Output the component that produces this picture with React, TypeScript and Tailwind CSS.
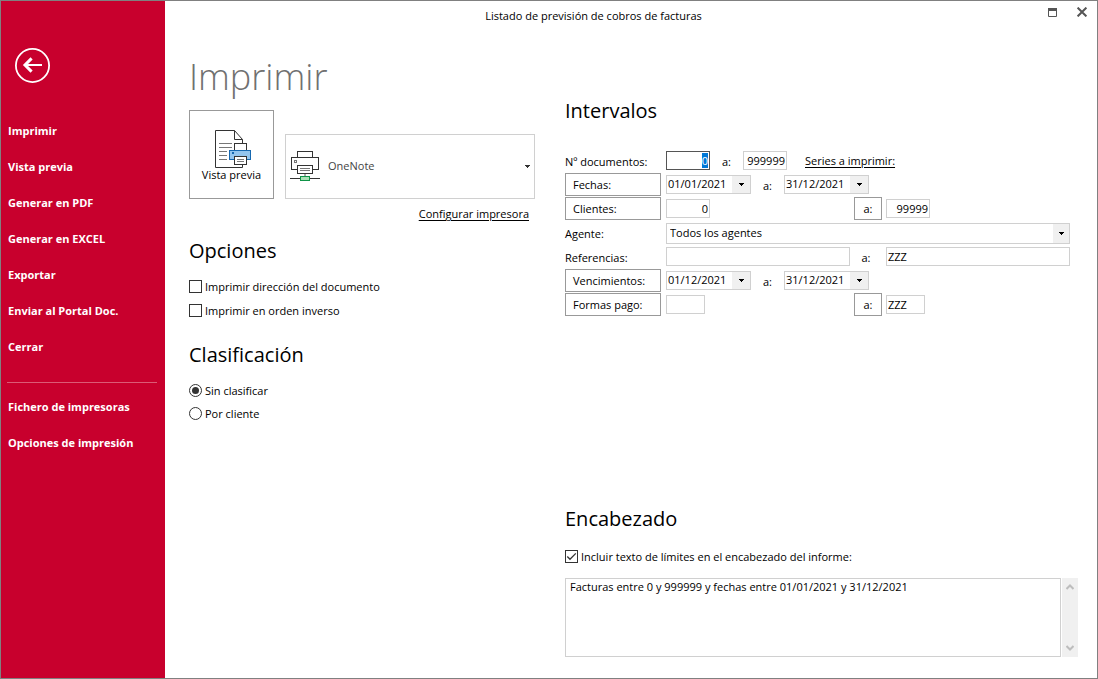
import { useState } from 'react';
import type { ReactNode } from 'react';
import { clsx } from 'clsx';

const MENU = [
  'Imprimir',
  'Vista previa',
  'Generar en PDF',
  'Generar en EXCEL',
  'Exportar',
  'Enviar al Portal Doc.',
  'Cerrar'
];

const SETTINGS_MENU = ['Fichero de impresoras', 'Opciones de impresión'];

function BackIcon() {
  return (
    <svg width="35" height="35" viewBox="0 0 35 35" fill="none" stroke="#fff" aria-hidden="true">
      <circle cx="17.5" cy="17.5" r="16.6" strokeWidth="1.8" />
      <path d="M10.5 17H27" strokeWidth="2" />
      <path d="M16.6 10.4L10 17L16.6 23.6" strokeWidth="3" />
    </svg>
  );
}

function PreviewIcon() {
  return (
    <svg width="37" height="38" viewBox="0 0 37 38" fill="none" aria-hidden="true">
      <path d="M0.5 0.5H19.5L27.5 9.5V37.5H0.5Z" fill="#fff" stroke="#333" />
      <path d="M19.5 0.5V9.5H27.5" stroke="#333" />
      <path d="M4 13.5H17M4 17.5H17M4 21.5H12M4 25.5H12M4 29.5H12" stroke="#777" />
      <rect x="19.5" y="13.5" width="12" height="8" fill="#fff" stroke="#333" />
      <rect x="14.5" y="20.5" width="21" height="9" fill="#93c5ee" stroke="#1668b0" />
      <rect x="17" y="22" width="2" height="2" fill="#1668b0" />
      <rect x="19.5" y="26.5" width="12" height="8" fill="#fff" stroke="#333" />
      <path d="M22 29.5H29M22 31.5H29" stroke="#777" />
    </svg>
  );
}

function PrinterIcon() {
  return (
    <svg width="30" height="31" viewBox="0 0 30 31" fill="none" className="shrink-0" aria-hidden="true">
      <rect x="7.5" y="0.5" width="15" height="7" fill="#fff" stroke="#333" />
      <rect x="1.5" y="6.5" width="27" height="12" fill="#fff" stroke="#333" />
      <rect x="4.5" y="9.5" width="2" height="2" stroke="#777" />
      <rect x="7.5" y="14.5" width="15" height="8" fill="#fff" stroke="#333" />
      <path d="M10 17.5H20M10 19.5H20" stroke="#777" />
      <path d="M15 23V25" stroke="#aaa" strokeWidth="2" />
      <path d="M0 27.5H30" stroke="#333" />
      <rect x="10.5" y="25.5" width="9" height="4" fill="#a9e0b5" stroke="#0f9347" />
    </svg>
  );
}

function Caret() {
  return (
    <svg width="5" height="3" viewBox="0 0 5 3" aria-hidden="true" shapeRendering="crispEdges">
      <path d="M0 0H5V1H4V2H3V3H2V2H1V1H0Z" fill="currentColor" />
    </svg>
  );
}

function SectionTitle({ children, className }: { children: ReactNode; className?: string }) {
  return <h2 className={clsx('text-[20px] leading-7', className)}>{children}</h2>;
}

function Field({ label, className, ...rest }: React.ComponentProps<'input'> & { label: string }) {
  return (
    <input
      aria-label={label}
      className={clsx(
        'h-[19px] min-w-0 border border-[#d0d0d0] bg-white px-px pb-px leading-[14px] outline-none',
        'selection:bg-[#0078d7] selection:text-white focus:border-[#555]',
        className
      )}
      {...rest}
    />
  );
}

function DateField({ label, value }: { label: string; value: string }) {
  return (
    <div className="flex h-[19px] w-[85px] border border-[#d0d0d0]">
      <input
        aria-label={label}
        defaultValue={value}
        className="min-w-0 flex-1 pb-px pl-px leading-[14px] outline-none"
      />
      <button
        type="button"
        aria-label={`Abrir calendario ${label}`}
        className="flex w-[18px] items-center justify-center bg-[#f0f0f0]"
      >
        <Caret />
      </button>
    </div>
  );
}

function BoxButton({ children, className }: { children: ReactNode; className?: string }) {
  return (
    <button type="button" className={clsx('h-[23px] border border-[#999] bg-white hover:bg-gray-50', className)}>
      {children}
    </button>
  );
}

function Row({ label, boxed, children }: { label: string; boxed?: boolean; children: ReactNode }) {
  return (
    <div className="flex h-6 items-center pb-px">
      {boxed ? (
        <BoxButton className="mr-[5px] w-24 shrink-0 pl-[7px] text-left">{label}</BoxButton>
      ) : (
        <span className="mr-[5px] w-24 shrink-0 pt-0.5">{label}</span>
      )}
      {children}
    </div>
  );
}

function DateRange({ name, from, to }: { name: string; from: string; to: string }) {
  return (
    <>
      <DateField label={`${name} desde`} value={from} />
      <span className="w-[33px] pt-0.5 text-center">a:</span>
      <DateField label={`${name} hasta`} value={to} />
    </>
  );
}

function Check({ label, defaultChecked }: { label: string; defaultChecked?: boolean }) {
  return (
    <label className="flex h-6 items-center gap-[3px]">
      <span className="mb-px grid size-[13px] shrink-0">
        <input
          type="checkbox"
          defaultChecked={defaultChecked}
          className="peer col-start-1 row-start-1 size-[13px] appearance-none border border-[#333] bg-white"
        />
        <svg
          viewBox="0 0 13 13"
          fill="none"
          stroke="#333"
          strokeWidth="1.3"
          className="pointer-events-none invisible col-start-1 row-start-1 size-[13px] peer-checked:visible"
          aria-hidden="true"
        >
          <path d="M2.3 6.5L5 9.3L10.8 3.4" />
        </svg>
      </span>
      {label}
    </label>
  );
}

function Radio({ label, checked, onChange }: { label: string; checked: boolean; onChange: () => void }) {
  return (
    <label className="flex h-[23px] items-center gap-[3px]">
      <input
        type="radio"
        name="clasificacion"
        checked={checked}
        onChange={onChange}
        className="grid size-[13px] shrink-0 appearance-none place-content-center rounded-full border border-[#333] before:size-[7px] before:rounded-full checked:before:bg-[#333]"
      />
      {label}
    </label>
  );
}

function Sidebar() {
  const itemClass = 'flex h-9 w-full items-center pl-[7px] text-left font-bold hover:bg-[#b00026]';

  return (
    <aside className="w-[164px] shrink-0 bg-[#c8002d] pt-[47px] text-white">
      <button type="button" aria-label="Volver" className="ml-3.5 block rounded-full">
        <BackIcon />
      </button>
      <nav className="mt-[30px]">
        {MENU.map(item => (
          <button key={item} type="button" className={itemClass}>
            {item}
          </button>
        ))}
        <hr className="mt-[17px] mr-2 mb-1.5 ml-1.5 border-[#dc5b76]" />
        {SETTINGS_MENU.map(item => (
          <button key={item} type="button" className={itemClass}>
            {item}
          </button>
        ))}
      </nav>
    </aside>
  );
}

function TitleBar() {
  return (
    <header className="flex h-[30px] items-center">
      <div className="flex-1 text-center">Listado de previsión de cobros de facturas</div>
      <div className="flex w-[75px] items-center justify-end gap-5 pr-2.5 pb-2">
        <button type="button" aria-label="Maximizar">
          <svg width="9" height="9" viewBox="0 0 9 9" fill="none" stroke="#555" className="block">
            <path d="M0.5 0.5H8.5V8.5H0.5Z" />
            <path d="M0 1.5H9" strokeWidth="3" />
          </svg>
        </button>
        <button type="button" aria-label="Cerrar ventana">
          <svg width="10" height="10" viewBox="0 0 10 10" stroke="#555" strokeWidth="2" className="block">
            <path d="M0.6 0.6L9.4 9.4M9.4 0.6L0.6 9.4" />
          </svg>
        </button>
      </div>
    </header>
  );
}

function PrintPanel() {
  const [order, setOrder] = useState('none');

  return (
    <section className="w-[346px] shrink-0 pt-[22px]">
      <h1 className="text-[36px] leading-[48px] font-light text-[#707070]">Imprimir</h1>
      <div className="mt-[9px] flex items-end gap-[11px]">
        <button
          type="button"
          className="flex h-[89px] w-[85px] shrink-0 flex-col items-center border border-[#999] pt-[19px] leading-[14px]"
        >
          <span className="pl-1">
            <PreviewIcon />
          </span>
          Vista previa
        </button>
        <div className="relative flex h-[65px] flex-1 items-center border border-[#d0d0d0] pl-1">
          <PrinterIcon />
          <select
            aria-label="Impresora"
            className="h-full min-w-0 flex-1 appearance-none pb-0.5 pl-2 text-[#444] outline-none"
          >
            <option>OneNote</option>
          </select>
          <span className="pointer-events-none absolute right-1 text-[#333]">
            <Caret />
          </span>
        </div>
      </div>
      <div className="mt-[7px] pr-1.5 text-right">
        <a href="#configurar" className="underline underline-offset-2">
          Configurar impresora
        </a>
      </div>

      <SectionTitle className="mt-[15px]">Opciones</SectionTitle>
      <div className="mt-2.5">
        <Check label="Imprimir dirección del documento" />
        <Check label="Imprimir en orden inverso" />
      </div>

      <SectionTitle className="mt-[18px]">Clasificación</SectionTitle>
      <div className="mt-2.5">
        <Radio label="Sin clasificar" checked={order === 'none'} onChange={() => setOrder('none')} />
        <Radio label="Por cliente" checked={order === 'client'} onChange={() => setOrder('client')} />
      </div>
    </section>
  );
}

function RangesPanel() {
  return (
    <section className="flex min-w-0 flex-1 flex-col pt-[66px]">
      <SectionTitle>Intervalos</SectionTitle>
      <div className="mt-6 mr-2">
        <Row label="Nº documentos:">
          <Field
            label="Documento desde"
            defaultValue="0"
            autoFocus
            onFocus={e => e.target.select()}
            className="w-11 text-right"
          />
          <span className="w-[33px] pt-0.5 text-center">a:</span>
          <Field label="Documento hasta" defaultValue="999999" className="w-11 text-right" />
          <a href="#series" className="ml-[18px] underline underline-offset-2">
            Series a imprimir:
          </a>
        </Row>
        <Row label="Fechas:" boxed>
          <DateRange name="Fecha" from="01/01/2021" to="31/12/2021" />
        </Row>
        <Row label="Clientes:" boxed>
          <div className="mr-1 flex w-[184px]">
            <Field label="Cliente desde" defaultValue="0" className="w-11 text-right" />
          </div>
          <BoxButton className="mr-1 w-7">a:</BoxButton>
          <Field label="Cliente hasta" defaultValue="99999" className="w-11 text-right" />
        </Row>
        <Row label="Agente:">
          <div className="relative mt-px flex h-[21px] flex-1 border border-[#d0d0d0]">
            <select aria-label="Agente" className="w-full appearance-none pl-[3px] outline-none">
              <option>Todos los agentes</option>
            </select>
            <span className="pointer-events-none absolute inset-y-0 right-0 flex w-4 items-center justify-center bg-[#f0f0f0]">
              <Caret />
            </span>
          </div>
        </Row>
        <Row label="Referencias:">
          <Field label="Referencia desde" className="mr-1 w-[184px]" />
          <span className="mr-1 w-7 pt-0.5 pr-1 text-center">a:</span>
          <Field label="Referencia hasta" defaultValue="ZZZ" className="flex-1" />
        </Row>
        <Row label="Vencimientos:" boxed>
          <DateRange name="Vencimiento" from="01/12/2021" to="31/12/2021" />
        </Row>
        <Row label="Formas pago:" boxed>
          <div className="mr-1 flex w-[184px]">
            <Field label="Forma de pago desde" className="w-[39px]" />
          </div>
          <BoxButton className="mr-1 w-7">a:</BoxButton>
          <Field label="Forma de pago hasta" defaultValue="ZZZ" className="w-[39px]" />
        </Row>
      </div>

      <SectionTitle className="mt-auto">Encabezado</SectionTitle>
      <div className="mt-3">
        <Check label="Incluir texto de límites en el encabezado del informe:" defaultChecked />
      </div>
      <div className="mt-[9px] flex h-[79px] gap-px">
        <textarea
          aria-label="Texto del encabezado"
          defaultValue="Facturas entre 0 y 999999 y fechas entre 01/01/2021 y 31/12/2021"
          className="flex-1 resize-none border border-[#d0d0d0] px-1 leading-4 outline-none"
        />
        <div className="flex w-4 flex-col items-center justify-between bg-[#f0f0f0] py-1.5" aria-hidden="true">
          <svg width="8" height="6" viewBox="0 0 8 6" fill="none" stroke="#bdbdbd" strokeWidth="2">
            <path d="M0.5 5L4 1.5L7.5 5" />
          </svg>
          <svg width="8" height="6" viewBox="0 0 8 6" fill="none" stroke="#bdbdbd" strokeWidth="2">
            <path d="M0.5 1L4 4.5L7.5 1" />
          </svg>
        </div>
      </div>
    </section>
  );
}

export default function App() {
  return (
    <div className="flex min-h-screen border border-[#808080] bg-white font-['Open_Sans','Noto_Sans',sans-serif] text-[11px] leading-4 text-black">
      <Sidebar />
      <div className="flex min-w-0 flex-1 flex-col">
        <TitleBar />
        <main className="flex flex-1 gap-[30px] pr-[19px] pb-[21px] pl-6">
          <PrintPanel />
          <RangesPanel />
        </main>
      </div>
    </div>
  );
}
